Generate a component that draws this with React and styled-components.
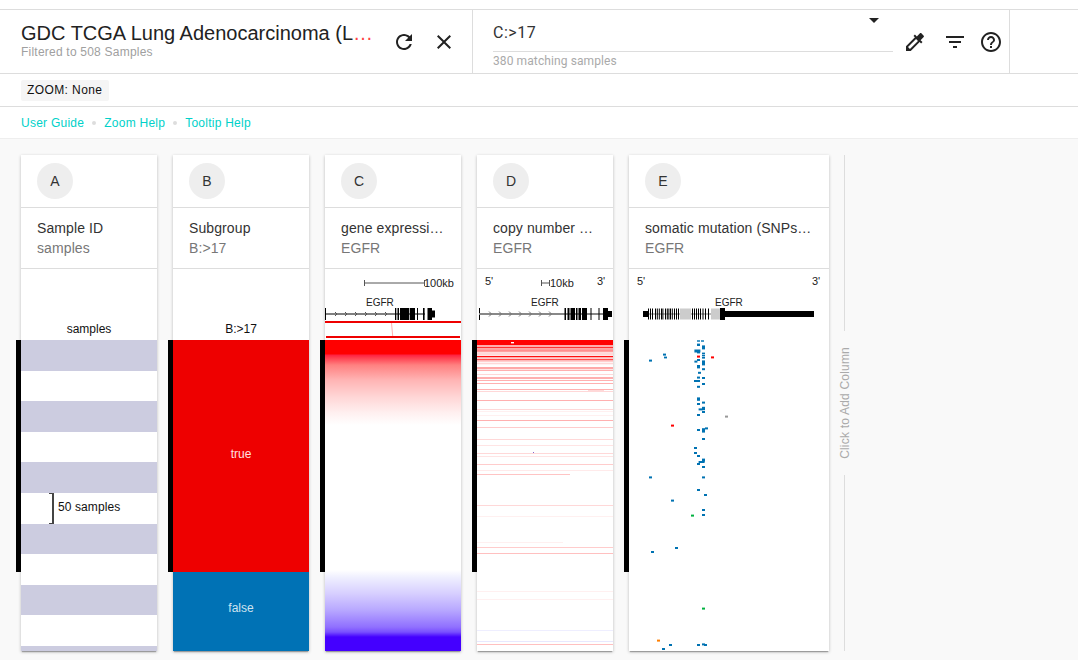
import styled, { createGlobalStyle } from "styled-components";

const GlobalStyle = createGlobalStyle`
  html, body {
    margin: 0;
    padding: 0;
    background: #f9f9f9;
    font-family: "Liberation Sans", Arial, sans-serif;
  }
`;

const Page = styled.div`
  width: 1078px;
  height: 660px;
  overflow: hidden;
`;

const Top = styled.div`
  background: #fff;
  padding-top: 9px;
`;

const Header = styled.div`
  display: flex;
  height: 63px;
  border-top: 1px solid #ddd;
  border-bottom: 1px solid #ddd;
`;

const TitleSection = styled.div`
  display: flex;
  align-items: center;
  width: 473px;
  box-sizing: border-box;
  padding: 0 8px 0 21px;
  border-right: 1px solid #ddd;
`;

const TitleBlock = styled.div`
  width: 356px;
  margin-right: 7px;
  margin-top: -2px;
`;

const Title = styled.div`
  font-size: 20px;
  line-height: 24px;
  color: #f44;
  white-space: nowrap;
  overflow: hidden;
  text-overflow: ellipsis;
  span {
    color: #222;
  }
`;

const SubTitle = styled.div`
  font-size: 12px;
  line-height: 15px;
  letter-spacing: 0.22px;
  color: #a0a0a0;
`;

const IconBox = styled.div`
  flex: none;
  width: ${(p) => p.$w || 40}px;
  height: 40px;
  margin-top: 1px;
  display: flex;
  align-items: center;
  justify-content: center;
  svg {
    display: block;
    fill: #222;
  }
`;

const FilterSection = styled.div`
  display: flex;
  align-items: center;
  width: 537px;
  box-sizing: border-box;
  padding-left: 20px;
  border-right: 1px solid #ddd;
`;

const Field = styled.div`
  position: relative;
  width: 400px;
  margin: -4px 2px 0 0;
  font-family: Roboto, sans-serif;
`;

const FieldValue = styled.div`
  height: 41px;
  box-sizing: border-box;
  padding-top: 13px;
  font-size: 16px;
  line-height: 18px;
  letter-spacing: 0.5px;
  color: #333;
  border-bottom: 1px solid #ddd;
`;

const FieldHelp = styled.div`
  font-size: 12px;
  line-height: 14px;
  letter-spacing: 0.1px;
  padding-top: 2px;
  color: #aaa;
`;

const Caret = styled.div`
  position: absolute;
  right: 14px;
  top: 7px;
  border-left: 5px solid transparent;
  border-right: 5px solid transparent;
  border-top: 5px solid #222;
`;

const ZoomRow = styled.div`
  height: 32px;
  display: flex;
  align-items: center;
  padding-left: 21px;
  border-bottom: 1px solid #ddd;
`;

const ZoomChip = styled.div`
  height: 21px;
  line-height: 21px;
  padding: 0 7px 0 6px;
  font-size: 12px;
  letter-spacing: 0.4px;
  color: #111;
  background: #f5f5f5;
  border-radius: 2px;
`;

const LinkRow = styled.div`
  height: 31px;
  display: flex;
  align-items: center;
  padding-left: 21px;
  border-bottom: 1px solid #eee;
`;

const HelpLink = styled.a`
  font-size: 12px;
  letter-spacing: 0.25px;
  color: #00d1c9;
`;

const Dot = styled.span`
  width: 4px;
  height: 4px;
  margin: 0 8px;
  border-radius: 50%;
  background: #ddd;
`;

const Board = styled.div`
  display: flex;
  gap: 16px;
  padding: 16px 0 0 21px;
`;

const Card = styled.div`
  position: relative;
  flex: none;
  width: ${(p) => p.$w || 136}px;
  height: 496px;
  background: #fff;
  box-shadow: 0 1px 3px rgba(0, 0, 0, 0.25), 0 2px 1px -1px rgba(0, 0, 0, 0.25);
`;

const CardTop = styled.div`
  height: 52px;
  display: flex;
  align-items: center;
  padding-left: 16px;
  border-bottom: 1px solid #ddd;
`;

const Letter = styled.div`
  width: 36px;
  height: 36px;
  border-radius: 50%;
  background: #eee;
  color: #333;
  font-size: 14px;
  line-height: 36px;
  text-align: center;
`;

const CardTitle = styled.div`
  height: 61px;
  box-sizing: border-box;
  padding: 10px 16px 0;
  border-bottom: 1px solid #ddd;
  font-size: 14px;
  line-height: 20px;
  letter-spacing: 0.1px;
`;

const ColName = styled.div`
  color: #333;
  white-space: nowrap;
  overflow: hidden;
  text-overflow: ellipsis;
`;

const ColSub = styled.div`
  color: #777;
`;

const Annotation = styled.div`
  height: 71px;
  box-sizing: border-box;
  padding-bottom: ${(p) => (p.$label ? 4 : 0)}px;
  display: flex;
  align-items: flex-end;
  justify-content: center;
  font-size: 12px;
  line-height: 14px;
  color: #111;
  svg {
    display: block;
  }
`;

const Track = styled.div`
  height: 311px;
  overflow: hidden;
  svg {
    display: block;
  }
`;

const Stripe = styled.div`
  height: 30.62px;
  background: ${(p) => (p.$on ? "#cccce0" : "#fff")};
`;

const SizeMark = styled.div`
  position: absolute;
  left: 28px;
  top: 338px;
  width: 3px;
  height: 29px;
  border: 1px solid #444;
  border-left: none;
  border-right-width: 2px;
`;

const SizeLabel = styled.div`
  position: absolute;
  left: 37px;
  top: 345px;
  font-size: 12px;
  line-height: 14px;
  letter-spacing: 0.1px;
  color: #111;
`;

const FilterBar = styled.div`
  position: absolute;
  left: -5px;
  top: 185px;
  width: 5px;
  height: 232px;
  background: #000;
`;

const Segment = styled.div`
  height: ${(p) => p.$h}px;
  box-sizing: border-box;
  padding-bottom: ${(p) => p.$pad}px;
  background: ${(p) => p.$bg};
  color: ${(p) => p.$fg};
  display: flex;
  align-items: center;
  justify-content: center;
  font-size: 12px;
`;

const Heat = styled.div`
  height: 311px;
  background: linear-gradient(
    to bottom,
    #ff0000 0,
    #ff0000 14px,
    #ff2040 15px,
    #ff4050 18px,
    #ff8080 25px,
    #ffb4b4 40px,
    #ffd6d6 57px,
    #fff0f0 73px,
    #ffffff 85px,
    #ffffff 230px,
    #f0f0ff 237px,
    #d8d0ff 253px,
    #b8a8ff 270px,
    #9070ff 287px,
    #7a50ff 292px,
    #4400ff 297px,
    #4400ff 311px
  );
`;

const AddColumn = styled.div`
  flex: none;
  width: 31px;
  height: 496px;
  margin-left: -16px;
  display: flex;
  flex-direction: column;
  align-items: center;
  color: #aaa;
  font-size: 12px;
  letter-spacing: 0.2px;
`;

const AddLine = styled.div`
  flex: 1;
  width: 1px;
  background: #ddd;
`;

const AddText = styled.div`
  writing-mode: vertical-rl;
  transform: rotate(180deg);
  padding: 16px 0;
  line-height: 14px;
`;

const Icon = ({ d, size = 24 }) => (
  <svg width={size} height={size} viewBox="0 0 24 24">
    <path d={d} />
  </svg>
);

const icons = {
  refresh:
    "M17.65 6.35C16.2 4.9 14.21 4 12 4c-4.42 0-7.99 3.58-7.99 8s3.57 8 7.99 8c3.73 0 6.84-2.55 7.73-6h-2.08c-.82 2.33-3.04 4-5.65 4-3.31 0-6-2.69-6-6s2.69-6 6-6c1.66 0 3.14.69 4.22 1.78L13 11h7V4l-2.35 2.35z",
  close:
    "M19 6.41L17.59 5 12 10.59 6.41 5 5 6.41 10.59 12 5 17.59 6.41 19 12 13.41 17.59 19 19 17.59 13.41 12z",
  colorize:
    "M20.71 5.63l-2.34-2.34c-.39-.39-1.02-.39-1.41 0l-3.12 3.12-1.93-1.91-1.41 1.41 1.42 1.42L3 16.25V21h4.75l8.92-8.92 1.42 1.42 1.41-1.41-1.92-1.92 3.12-3.12c.4-.4.4-1.03.01-1.42zM6.92 19L5 17.08l8.06-8.06 1.92 1.92L6.92 19z",
  filter: "M10 18h4v-2h-4v2zM3 6v2h18V6H3zm3 7h12v-2H6v2z",
  help:
    "M11 18h2v-2h-2v2zm1-16C6.48 2 2 6.48 2 12s4.48 10 10 10 10-4.48 10-10S17.52 2 12 2zm0 18c-4.41 0-8-3.59-8-8s3.59-8 8-8 8 3.59 8 8-3.59 8-8 8zm0-14c-2.21 0-4 1.79-4 4h2c0-1.1.9-2 2-2s2 .9 2 2c0 2-3 1.75-3 5h2c0-2.25 3-2.5 3-5 0-2.21-1.79-4-4-4z",
};

const trackFont = { fontFamily: '"Liberation Sans", Arial, sans-serif', fontSize: 11, fill: "#222" };

// [y, height, colour] of the copy number rows, in page coordinates
const RED = "#ff0000";
const PK = "#ffb0b0";
const PL = "#ffd8d8";
const VP = "#fff0f0";
const cnvRows = [
  [340, 5, RED],
  [345, 2, "#ffaaaa"],
  [347, 1.6, "#ff3030"],
  [348.6, 1, PL],
  [349.6, 1, "#ff3030"],
  [350.6, 1.6, "#ffa0a0"],
  [352.2, 3.4, PL],
  [356, 1, "#ff1010"],
  [357, 1.6, "#ffb0b0"],
  [359, 1.3, "#ff5050"],
  [360.3, 1.3, PK],
  [362.7, 1.6, PL],
  [367, 2.3, "#ffa8a8"],
  [370, 1, PK],
  [374, 1, PL],
  [377, 2, PK],
  [380, 1, PK],
  [383, 1, PK],
  [389, 1, PK],
  [391, 1, PL],
  [400, 1, PK],
  [409, 1, PL],
  [411, 1, VP],
  [415, 1, VP],
  [420, 1, PK],
  [427, 1, "#ffcccc"],
  [439, 1, PL],
  [445, 1, "#ffe4e4"],
  [453, 1, PL],
  [456, 1, "#ffe4e4"],
  [464, 1, "#ffcccc"],
  [470, 1, "#ffeaea"],
  [505, 1, PL],
  [516, 1, VP],
  [547, 1, "#ffcccc"],
  [553, 1, "#ffc0c0"],
  [591, 1, VP],
  [599, 1, VP],
  [630, 1, "#eeeeff"],
  [641, 1, "#e8e8ff"],
  [644, 1, "#ffc0c0"],
];

const B = "#0072b2";
const R = "#ff0000";
const G = "#00b140";
const mutations = [
  [697, 340.3, 3, 1.4, B], [701, 340.3, 3, 1.4, B], [697, 343.6, 3, 2.4, B], [702, 345.4, 3, 4, B],
  [694.4, 349.5, 6, 3, B], [697, 351.8, 3, 1.6, B], [702, 352.6, 3, 1.8, B], [702, 355, 3, 1.4, B],
  [702, 357, 3, 1.6, B], [697, 355.6, 3, 2, R], [711, 356.4, 3, 2, R], [663, 353.6, 3, 2, B],
  [664, 356.6, 3, 1.8, B], [649, 359.6, 3, 2, B], [697, 359, 3, 2, B], [694.4, 360.6, 3, 2, B],
  [702, 360.4, 3, 5, B], [697, 365, 3, 3.4, B], [702, 368.2, 3, 2, B], [698, 371.8, 3, 2, B],
  [697, 376.6, 3, 2, B], [702, 377, 3, 2, B], [694, 380, 6, 2, B], [702, 383, 3, 2, B],
  [697, 385.8, 3, 2, B], [697, 397.4, 3, 3.4, B], [702, 401.6, 3, 2, B], [697, 403, 3, 2, B],
  [702, 406.8, 3, 3.4, B], [698.6, 408.4, 4, 2, B], [702, 411, 3, 2, B], [697, 414, 3, 2, B],
  [725, 415.6, 3, 2, "#999"], [671, 424.6, 3, 2, R], [697, 429, 3, 2, B], [702, 428.2, 3, 3, B],
  [705, 427.4, 3, 2, B], [702, 431, 3, 1.6, B], [702, 438, 3, 2, B], [694, 447, 3, 2, B],
  [694, 452, 3, 2, B], [697, 455, 3, 2, B], [702, 458.6, 3, 3, B], [698.6, 461, 6, 2, B],
  [697, 463, 3, 2, B], [702, 466, 3, 2, B], [649, 476.4, 3, 2, B], [702, 476.4, 3, 2, B],
  [697, 489, 3, 2, B], [704, 494, 3, 2, B], [671, 499.6, 3, 2, B], [702, 509, 3, 2, B],
  [702, 514, 3, 2, B], [691, 514.6, 3, 2, G], [675, 547, 3, 2, B], [651, 551, 3, 2, B],
  [702, 607.6, 3, 2, G], [657, 639.6, 3, 2, "#ff7f00"], [669, 644, 3, 2, B], [697, 644, 3, 2, B],
  [702, 643.4, 3, 2, B], [704, 644, 3, 2, B], [662, 648, 3, 2, B],
];

const GeneC = () => (
  <svg width="136" height="71" viewBox="325 269 136 71">
    <path d="M364.5 280v6M364.5 283H424M424.5 280v6" stroke="#555" fill="none" />
    <text x="424" y="287" style={trackFont}>100kb</text>
    <text x="366" y="306" style={{ ...trackFont, fontSize: 10 }}>EGFR</text>
    <rect x="325" y="308" width="1" height="12" fill="#000" />
    <rect x="325" y="313.5" width="100" height="1" fill="#000" />
    {[335, 345, 355, 365, 375, 385].map((x) => (
      <path key={x} d={`M${x} 312l2 2-2 2`} stroke="#555" fill="none" />
    ))}
    {[[395, 1.3], [397.5, 1.5], [400, 9.3], [410, 5], [417, 1], [423, 1.6], [427.5, 4.5]].map(([x, w]) => (
      <rect key={x} x={x} y="308" width={w} height="12" fill="#000" />
    ))}
    <rect x="432" y="310.5" width="3" height="7" fill="#000" />
    <rect x="325" y="321" width="136" height="2" fill="#ee0000" />
    <path d="M391.5 323L392.7 336" stroke="#ffb0b0" fill="none" />
    <rect x="326" y="336" width="134" height="2" fill="#ee0000" />
  </svg>
);

const GeneD = () => (
  <svg width="136" height="71" viewBox="477 269 136 71">
    <text x="485" y="285" style={trackFont}>5'</text>
    <text x="597" y="285" style={trackFont}>3'</text>
    <path d="M541.5 280v6M541.5 283H549M549.5 280v6" stroke="#555" fill="none" />
    <text x="550" y="287" style={trackFont}>10kb</text>
    <text x="531" y="306" style={{ ...trackFont, fontSize: 10 }}>EGFR</text>
    <rect x="479" y="308" width="1" height="12" fill="#000" />
    <rect x="479" y="313" width="132" height="2" fill="#888" />
    {[489, 499, 509, 519, 529, 539, 549].map((x) => (
      <path key={x} d={`M${x} 311.5l2.5 2.5-2.5 2.5`} stroke="#777" fill="none" />
    ))}
    {[[564.5, 1.5], [567.5, 2], [570.5, 4.5], [576, 1.5], [578.5, 2.5], [582, 5], [590.5, 1], [598.5, 1], [603, 5]].map(([x, w]) => (
      <rect key={x} x={x} y="308" width={w} height="12" fill="#000" />
    ))}
    <rect x="608" y="311" width="4" height="6" fill="#000" />
  </svg>
);

const GeneE = () => (
  <svg width="200" height="71" viewBox="629 269 200 71">
    <text x="637" y="285" style={trackFont}>5'</text>
    <text x="812" y="285" style={trackFont}>3'</text>
    <text x="715" y="306" style={{ ...trackFont, fontSize: 10 }}>EGFR</text>
    <rect x="643" y="311" width="5" height="6" fill="#000" />
    <rect x="648" y="313.5" width="72" height="1" fill="#777" />
    {[648, 650, 652, 655, 656.8, 658.8, 661, 662.4, 665, 666.8, 668.4, 670, 671.8, 674, 676, 678].map((x) => (
      <rect key={x} x={x} y="308.5" width="1" height="11" fill="#000" />
    ))}
    <rect x="680" y="308.5" width="11" height="11" fill="#ccc" />
    {[692, 694, 696, 698, 700, 702.5, 705, 708].map((x) => (
      <rect key={x} x={x} y="308.5" width="1" height="11" fill="#000" />
    ))}
    <rect x="711" y="308.5" width="9.5" height="11" fill="#ccc" />
    <rect x="720" y="308" width="5" height="12" fill="#000" />
    <rect x="725" y="311" width="89" height="6" fill="#000" />
  </svg>
);

const CnvTrack = () => (
  <svg width="136" height="311" viewBox="477 340 136 311">
    {cnvRows.map(([y, h, c]) => (
      <rect key={y} x="477" y={y} width="136" height={h} fill={c} />
    ))}
    <rect x="477" y="474" width="93" height="1" fill="#ffc4c4" />
    <rect x="477" y="542" width="86" height="1" fill="#fff0f0" />
    <rect x="588" y="390" width="16" height="1" fill={PL} />
    <rect x="511" y="342" width="3" height="1.4" fill="#fff" />
    <rect x="533" y="452" width="1" height="1" fill="#8866cc" />
  </svg>
);

const MutationTrack = () => (
  <svg width="200" height="311" viewBox="629 340 200 311">
    {mutations.map(([x, y, w, h, c]) => (
      <rect key={`${x}-${y}`} x={x} y={y} width={w} height={h} fill={c} />
    ))}
  </svg>
);

const columns = [
  { id: "B", name: "Subgroup", sub: "B:>17", label: "B:>17" },
  { id: "C", name: "gene expression RNAseq", sub: "EGFR", gene: <GeneC />, track: <Heat /> },
  { id: "D", name: "copy number segments", sub: "EGFR", gene: <GeneD />, track: <CnvTrack /> },
  { id: "E", name: "somatic mutation (SNPs and small INDELs)", sub: "EGFR", gene: <GeneE />, track: <MutationTrack />, wide: true },
];

const App = () => {
  return (
    <Page>
      <GlobalStyle />
      <Top>
        <Header>
          <TitleSection>
            <TitleBlock>
              <Title>
                <span>GDC TCGA Lung Adenocarcinoma (LUAD)</span>
              </Title>
              <SubTitle>Filtered to 508 Samples</SubTitle>
            </TitleBlock>
            <IconBox><Icon d={icons.refresh} /></IconBox>
            <IconBox><Icon d={icons.close} /></IconBox>
          </TitleSection>
          <FilterSection>
            <Field>
              <FieldValue>C:&gt;17</FieldValue>
              <FieldHelp>380 matching samples</FieldHelp>
              <Caret />
            </Field>
            <IconBox><Icon d={icons.colorize} /></IconBox>
            <IconBox><Icon d={icons.filter} /></IconBox>
            <IconBox $w={32}><Icon d={icons.help} /></IconBox>
          </FilterSection>
        </Header>
        <ZoomRow>
          <ZoomChip>ZOOM: None</ZoomChip>
        </ZoomRow>
        <LinkRow>
          <HelpLink>User Guide</HelpLink>
          <Dot />
          <HelpLink>Zoom Help</HelpLink>
          <Dot />
          <HelpLink>Tooltip Help</HelpLink>
        </LinkRow>
      </Top>
      <Board>
        <Card>
          <CardTop><Letter>A</Letter></CardTop>
          <CardTitle>
            <ColName>Sample ID</ColName>
            <ColSub>samples</ColSub>
          </CardTitle>
          <Annotation $label>samples</Annotation>
          <Track>
            {[...Array(11)].map((_, i) => (
              <Stripe key={i} $on={i % 2 === 0} />
            ))}
          </Track>
          <SizeMark />
          <SizeLabel>50 samples</SizeLabel>
          <FilterBar />
        </Card>
        {columns.map((col) => (
          <Card key={col.id} $w={col.wide ? 200 : 136}>
            <CardTop><Letter>{col.id}</Letter></CardTop>
            <CardTitle>
              <ColName>{col.name}</ColName>
              <ColSub>{col.sub}</ColSub>
            </CardTitle>
            <Annotation $label={!col.gene}>{col.gene || col.label}</Annotation>
            <Track>
              {col.track || (
                <>
                  <Segment $h={232} $pad={4} $bg="#ee0000" $fg="#ffe0e0">true</Segment>
                  <Segment $h={79} $pad={8} $bg="#0072b5" $fg="#cfe3f0">false</Segment>
                </>
              )}
            </Track>
            <FilterBar />
          </Card>
        ))}
        <AddColumn>
          <AddLine />
          <AddText>Click to Add Column</AddText>
          <AddLine />
        </AddColumn>
      </Board>
    </Page>
  );
};

export default App;
